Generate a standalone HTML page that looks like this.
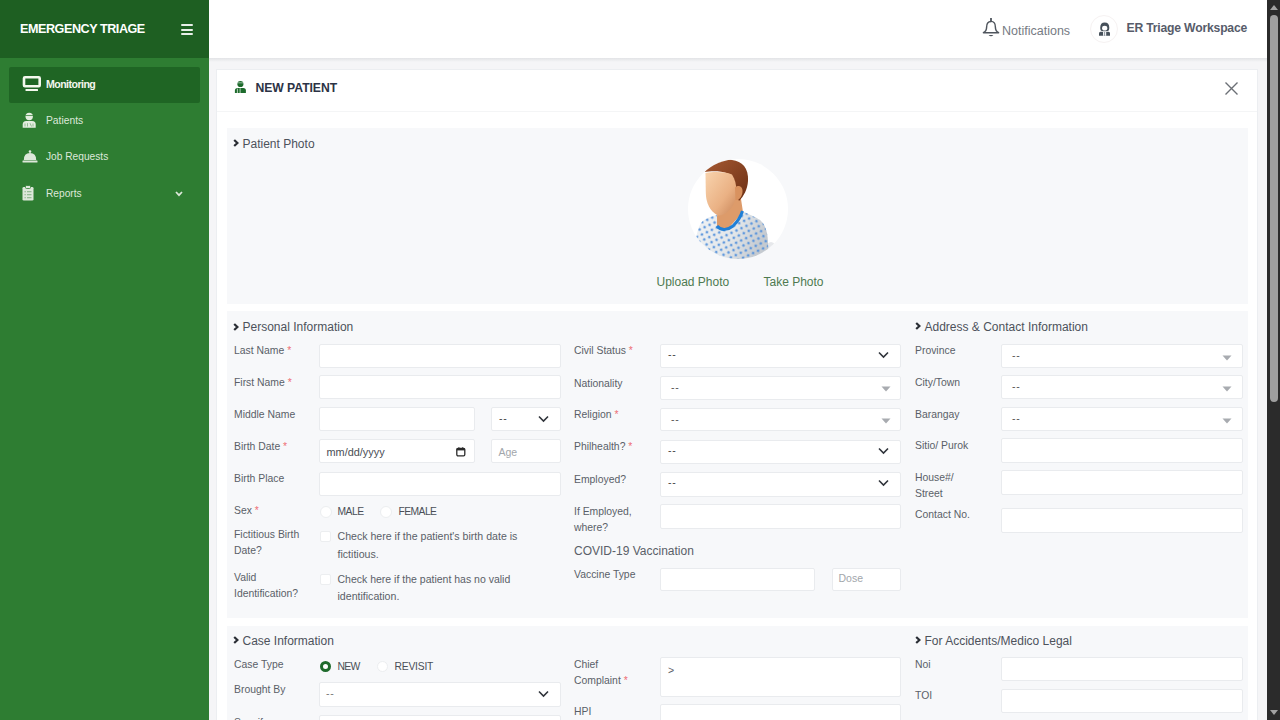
<!DOCTYPE html>
<html><head><meta charset="utf-8"><title>New Patient - Emergency Triage</title>
<style>
html,body{margin:0;padding:0;width:1280px;height:720px;overflow:hidden;background:#f0f1f4;font-family:"Liberation Sans",sans-serif}
.a{position:absolute}
.t{position:absolute;white-space:nowrap}
</style></head><body>
<div class="a" style="left:0px;top:0px;width:209px;height:58px;background:#1e5f22"></div>
<div class="a" style="left:0px;top:58px;width:209px;height:662px;background:#2e7d32"></div>
<div class="a" style="left:209px;top:0px;width:1058px;height:58px;background:#fff"></div>
<div class="a" style="left:209px;top:58px;width:1058px;height:662px;background:#f5f5f7"></div>
<div class="a" style="left:209px;top:58px;width:1058px;height:4px;background:linear-gradient(#e2e3e6,#f5f5f7)"></div>
<div class="a" style="left:1267px;top:0px;width:13px;height:720px;background:#2b2b2b"></div>
<div class="a" style="left:1270px;top:15px;width:8px;height:387px;background:#9f9f9f;border-radius:4px"></div>
<svg class="a" style="left:1269px;top:3px" width="10" height="9"><path d="M1 7 L5 2 L9 7 Z" fill="#a3a3a3"/></svg>
<svg class="a" style="left:1269px;top:708px" width="10" height="9"><path d="M1 2 L5 7 L9 2 Z" fill="#a3a3a3"/></svg>
<div class="t" style="left:20px;top:20.50px;font-size:12.6px;line-height:17px;color:#ffffff;font-weight:bold;letter-spacing:-0.45px;">EMERGENCY TRIAGE</div>
<div class="a" style="left:180.5px;top:24px;width:12.5px;height:2px;background:#e8efe8;border-radius:1px"></div>
<div class="a" style="left:180.5px;top:28.5px;width:12.5px;height:2.0px;background:#e8efe8;border-radius:1px"></div>
<div class="a" style="left:180.5px;top:33px;width:12.5px;height:2px;background:#e8efe8;border-radius:1px"></div>
<div class="a" style="left:9px;top:67px;width:191px;height:36px;background:#1f6524;border-radius:2px"></div>
<svg class="a" style="left:22px;top:75px" width="20" height="17" viewBox="0 0 20 17"><rect x="2" y="2.25" width="15.7" height="9" rx="1" fill="none" stroke="#f4f8ee" stroke-width="2.6"/><rect x="3.5" y="14" width="12.5" height="1.9" rx="0.5" fill="#f4f8ee"/></svg>
<div class="t" style="left:46px;top:77.00px;font-size:10.6px;line-height:14px;color:#f3f7ef;font-weight:bold;letter-spacing:-0.55px;">Monitoring</div>
<svg class="a" style="left:22px;top:112px" width="14" height="16" viewBox="0 0 14 16"><circle cx="7.2" cy="4.5" r="3.7" fill="#e3eddf"/><rect x="3.3" y="3" width="7.8" height="0.9" fill="#2e7d32" opacity="0.8"/><path d="M0.7 15.7 L0.7 12.5 Q0.7 9.2 4.2 9 L10.2 9 Q13.7 9.2 13.7 12.5 L13.7 15.7 Z" fill="#e3eddf"/><path d="M3 11.5 L3 14.5 M5.5 11.2 L5.5 14.5 M8 11.2 L9.5 14.5 M11 11.5 L11 14.5" stroke="#2e7d32" stroke-width="0.8" opacity="0.55"/></svg>
<div class="t" style="left:46px;top:113.50px;font-size:10.3px;line-height:14px;color:#dde8da;font-weight:normal;letter-spacing:0px;">Patients</div>
<svg class="a" style="left:22px;top:150px" width="16" height="13" viewBox="0 0 16 13"><circle cx="8" cy="1.6" r="1.3" fill="#dde8da"/><path d="M1.8 10 Q1.8 3 8 3 Q14.2 3 14.2 10 Z" fill="#dde8da"/><rect x="0.5" y="10.6" width="15" height="1.9" rx="0.5" fill="#dde8da"/></svg>
<div class="t" style="left:46px;top:149.50px;font-size:10.2px;line-height:14px;color:#dde8da;font-weight:normal;letter-spacing:0px;">Job Requests</div>
<svg class="a" style="left:22px;top:185px" width="12" height="16" viewBox="0 0 12 16"><rect x="0.5" y="2" width="11" height="13.6" rx="1.3" fill="#dde8da"/><rect x="3.5" y="0.5" width="5" height="3" rx="1" fill="#dde8da" stroke="#2e7d32" stroke-width="0.8"/><g fill="#2e7d32" opacity="0.4"><rect x="2.5" y="6" width="1.3" height="1.3"/><rect x="5" y="6" width="4.5" height="1.3"/><rect x="2.5" y="9" width="1.3" height="1.3"/><rect x="5" y="9" width="4.5" height="1.3"/><rect x="2.5" y="12" width="1.3" height="1.3"/><rect x="5" y="12" width="4.5" height="1.3"/></g></svg>
<div class="t" style="left:46px;top:186.50px;font-size:10.2px;line-height:14px;color:#dde8da;font-weight:normal;letter-spacing:0px;">Reports</div>
<svg class="a" style="left:175px;top:191px" width="8" height="6" viewBox="0 0 8 6"><path d="M1 1 L4 4.2 L7 1" fill="none" stroke="#dde8da" stroke-width="1.7"/></svg>
<svg class="a" style="left:982px;top:18px" width="18" height="20" viewBox="0 0 18 20"><path d="M9 0.6 L9 3.3" stroke="#4f555d" stroke-width="1.8" stroke-linecap="round"/><path d="M9 3.4 C5.6 3.4 4.6 5.8 4.6 9.2 C4.6 12.3 3.6 13.6 1.4 14.7 L16.6 14.7 C14.4 13.6 13.4 12.3 13.4 9.2 C13.4 5.8 12.4 3.4 9 3.4 Z" fill="none" stroke="#4f555d" stroke-width="1.45" stroke-linejoin="round"/><path d="M6.6 16.9 Q9 19.8 11.4 16.9 Z" fill="#4f555d"/></svg>
<div class="t" style="left:1002px;top:22.50px;font-size:12.5px;line-height:17px;color:#767b83;font-weight:normal;letter-spacing:0px;">Notifications</div>
<div class="a" style="left:1090px;top:15px;width:28px;height:28px;border-radius:50%;border:1px solid #f6f2f2;box-sizing:border-box;background:#fff"></div>
<svg class="a" style="left:1098px;top:21px" width="13" height="16" viewBox="0 0 13 16"><path d="M2.2 7 Q2.2 1.6 6.7 1.6 Q11.3 1.6 11.3 7 Q11.3 9.6 10 9.9 L3.5 9.9 Q2.2 9.6 2.2 7 Z" fill="#46505a"/><ellipse cx="6.7" cy="7.2" rx="2.6" ry="2.4" fill="#fff"/><path d="M1 14.8 L1 12.3 Q1 10.8 2.5 10.8 L10.5 10.8 Q12 10.8 12 12.3 L12 14.8 Z" fill="#46505a"/><rect x="5" y="10.8" width="3.2" height="4" fill="#eef1f4"/><rect x="6.4" y="10.8" width="0.5" height="4" fill="#46505a"/></svg>
<div class="t" style="left:1126.5px;top:20.00px;font-size:12.2px;line-height:16px;color:#575c6a;font-weight:bold;letter-spacing:-0.2px;">ER Triage Workspace</div>
<div class="a" style="left:217px;top:70px;width:1040px;height:650px;background:#fff;box-shadow:0 0 0 1px #eceef1"></div>
<div class="a" style="left:217px;top:111px;width:1040px;height:1px;background:#f4f5f6"></div>
<svg class="a" style="left:234px;top:80px" width="13" height="14" viewBox="0 0 13 14"><circle cx="6.4" cy="4" r="3.1" fill="#1d6b2c"/><rect x="3" y="2.4" width="6.8" height="0.9" fill="#fff" opacity="0.6"/><path d="M0.9 13.1 L0.9 10.5 Q0.9 7.9 3.5 7.9 L9.3 7.9 Q11.9 7.9 11.9 10.5 L11.9 13.1 Z" fill="#1d6b2c"/><path d="M3.4 8.6 L3.4 13.1 M6.1 8.2 L6.1 13.1" stroke="#fff" stroke-width="0.8" opacity="0.85"/></svg>
<div class="t" style="left:255.5px;top:80.00px;font-size:12.2px;line-height:16px;color:#2c3345;font-weight:bold;letter-spacing:-0.05px;">NEW PATIENT</div>
<svg class="a" style="left:1224px;top:81px" width="15" height="15" viewBox="0 0 15 15"><path d="M1.5 1.5 L13.5 13.5 M13.5 1.5 L1.5 13.5" stroke="#6b6f75" stroke-width="1.4"/></svg>
<div class="a" style="left:227px;top:128px;width:1021px;height:176px;background:#f7f8fa"></div>
<div class="a" style="left:227px;top:311px;width:1021px;height:307px;background:#f7f8fa"></div>
<div class="a" style="left:227px;top:626px;width:1021px;height:94px;background:#f7f8fa"></div>
<svg class="a" style="left:233.0px;top:139.0px" width="6" height="8" viewBox="0 0 6 8"><path d="M1.2 1 L4.4 4 L1.2 7" fill="none" stroke="#2a2e35" stroke-width="2.2"/></svg>
<div class="t" style="left:242.5px;top:136.00px;font-size:12px;line-height:16px;color:#4d525b;font-weight:normal;letter-spacing:0px;">Patient Photo</div>
<svg class="a" style="left:233.0px;top:322.59999999999997px" width="6" height="8" viewBox="0 0 6 8"><path d="M1.2 1 L4.4 4 L1.2 7" fill="none" stroke="#2a2e35" stroke-width="2.2"/></svg>
<div class="t" style="left:242.5px;top:319.00px;font-size:12px;line-height:16px;color:#4d525b;font-weight:normal;letter-spacing:0px;">Personal Information</div>
<svg class="a" style="left:915.0px;top:322.2px" width="6" height="8" viewBox="0 0 6 8"><path d="M1.2 1 L4.4 4 L1.2 7" fill="none" stroke="#2a2e35" stroke-width="2.2"/></svg>
<div class="t" style="left:924.5px;top:319.00px;font-size:12px;line-height:16px;color:#4d525b;font-weight:normal;letter-spacing:0px;">Address &amp; Contact Information</div>
<svg class="a" style="left:233.0px;top:636.2px" width="6" height="8" viewBox="0 0 6 8"><path d="M1.2 1 L4.4 4 L1.2 7" fill="none" stroke="#2a2e35" stroke-width="2.2"/></svg>
<div class="t" style="left:242.5px;top:633.00px;font-size:12px;line-height:16px;color:#4d525b;font-weight:normal;letter-spacing:0px;">Case Information</div>
<svg class="a" style="left:915.0px;top:636.4000000000001px" width="6" height="8" viewBox="0 0 6 8"><path d="M1.2 1 L4.4 4 L1.2 7" fill="none" stroke="#2a2e35" stroke-width="2.2"/></svg>
<div class="t" style="left:924.5px;top:633.00px;font-size:12px;line-height:16px;color:#4d525b;font-weight:normal;letter-spacing:0px;">For Accidents/Medico Legal</div>
<svg class="a" style="left:688px;top:159px" width="100" height="100" viewBox="0 0 100 100">
<defs>
<clipPath id="cc"><circle cx="50" cy="50" r="50"/></clipPath>
<linearGradient id="skin" x1="0" y1="0" x2="1" y2="1"><stop offset="0" stop-color="#f8d3ad"/><stop offset="0.6" stop-color="#eab184"/><stop offset="1" stop-color="#c98558"/></linearGradient>
<linearGradient id="hair" x1="0" y1="0" x2="1" y2="1"><stop offset="0" stop-color="#a65a33"/><stop offset="1" stop-color="#6b2f14"/></linearGradient>
<linearGradient id="gown" x1="0" y1="0" x2="1" y2="0.3"><stop offset="0" stop-color="#f1f3f5"/><stop offset="0.6" stop-color="#e3e7ea"/><stop offset="1" stop-color="#c5cad0"/></linearGradient>
<pattern id="dots" width="5.5" height="5.5" patternUnits="userSpaceOnUse" patternTransform="rotate(-25)"><circle cx="2.75" cy="2.75" r="1.4" fill="#5592dc"/></pattern>
</defs>
<circle cx="50" cy="50" r="50" fill="#fff"/>
<g clip-path="url(#cc)">
<ellipse cx="83" cy="92" rx="6" ry="9" fill="#e6e8eb"/>
<path d="M28 57 L40 50 L47 36 L53 40 L55 53 L38 72 L28 68 Z" fill="#dd9b6a"/>
<path d="M7 100 C7 85 8 72 13 64 C17 59 24 57 29 56 L29 67 C33 72 40 71 45 67 C50 62 53 57 54.5 52 C60 55 68 58 72 61 C78 66 80 75 80 85 L81 100 Z" fill="url(#gown)"/>
<path d="M7 100 C7 85 8 72 13 64 C17 59 24 57 29 56 L29 67 C33 72 40 71 45 67 C50 62 53 57 54.5 52 C60 55 68 58 72 61 C78 66 80 75 80 85 L81 100 Z" fill="url(#dots)" opacity="0.9"/>
<path d="M29 67 C33 72 40 71 45 67 C50 62 53 57 54.5 52" fill="none" stroke="#1f7fd6" stroke-width="3"/>
<path d="M16.5 13 C22 4 34 0 44 1 C54 2 61 9 60 22 C59.5 30 56 37 51 42 L47 33 C46 26 44 18 40 14.5 C32 11.5 23 12 16.5 13 Z" fill="url(#hair)"/>
<path d="M17.5 14 C25 12.5 37 12.5 44 15.5 C47 20 48.5 26 48.5 33 C48 42 44 50 38 54 C34 56.5 31 57 29 56 C22 52 18 44 17.8 34 Z" fill="url(#skin)"/>
<path d="M47 28.5 C50 25.5 55 27 54.5 33 C54 38 51 41.5 47.5 41 Z" fill="#d9925f"/>
</g>
</svg>
<div class="t" style="left:656.5px;top:274.00px;font-size:12px;line-height:16px;color:#4e7a50;font-weight:normal;letter-spacing:0px;">Upload Photo</div>
<div class="t" style="left:763.5px;top:274.00px;font-size:12px;line-height:16px;color:#4e7a50;font-weight:normal;letter-spacing:0px;">Take Photo</div>
<div class="t" style="left:234px;top:343.50px;font-size:10.4px;line-height:14px;color:#5a5f68;font-weight:normal;letter-spacing:0px;">Last Name<span style="color:#ee6e73"> *</span></div>
<div class="t" style="left:234px;top:375.50px;font-size:10.4px;line-height:14px;color:#5a5f68;font-weight:normal;letter-spacing:0px;">First Name<span style="color:#ee6e73"> *</span></div>
<div class="t" style="left:234px;top:407.50px;font-size:10.4px;line-height:14px;color:#5a5f68;font-weight:normal;letter-spacing:0px;">Middle Name</div>
<div class="t" style="left:234px;top:439.50px;font-size:10.4px;line-height:14px;color:#5a5f68;font-weight:normal;letter-spacing:0px;">Birth Date<span style="color:#ee6e73"> *</span></div>
<div class="t" style="left:234px;top:471.50px;font-size:10.4px;line-height:14px;color:#5a5f68;font-weight:normal;letter-spacing:0px;">Birth Place</div>
<div class="t" style="left:234px;top:503.50px;font-size:10.4px;line-height:14px;color:#5a5f68;font-weight:normal;letter-spacing:0px;">Sex<span style="color:#ee6e73"> *</span></div>
<div class="a" style="left:319px;top:343.5px;width:242px;height:24.0px;background:#fff;border:1px solid #e9ebee;border-radius:2px;box-sizing:border-box;"></div>
<div class="a" style="left:319px;top:375px;width:242px;height:24px;background:#fff;border:1px solid #e9ebee;border-radius:2px;box-sizing:border-box;"></div>
<div class="a" style="left:319px;top:407px;width:156px;height:24px;background:#fff;border:1px solid #e9ebee;border-radius:2px;box-sizing:border-box;"></div>
<div class="a" style="left:491px;top:407px;width:70px;height:24px;background:#fff;border:1px solid #e9ebee;border-radius:2px;box-sizing:border-box;"></div>
<div class="t" style="left:499px;top:411.00px;font-size:10.5px;line-height:14px;color:#444;font-weight:normal;letter-spacing:0.8px;">--</div>
<svg class="a" style="left:538px;top:415px" width="11" height="8" viewBox="0 0 11 8"><path d="M1 1.5 L5.5 6 L10 1.5" fill="none" stroke="#30343b" stroke-width="1.6"/></svg>
<div class="a" style="left:319px;top:439px;width:156px;height:24px;background:#fff;border:1px solid #e9ebee;border-radius:2px;box-sizing:border-box;"></div>
<div class="a" style="left:491px;top:439px;width:70px;height:24px;background:#fff;border:1px solid #e9ebee;border-radius:2px;box-sizing:border-box;"></div>
<div class="t" style="left:326.5px;top:444.50px;font-size:10.9px;line-height:15px;color:#4a4e55;font-weight:normal;letter-spacing:0px;">mm/dd/yyyy</div>
<svg class="a" style="left:455.5px;top:446.5px" width="10" height="10" viewBox="0 0 10 10"><rect x="0.8" y="1.4" width="8" height="7.4" rx="1.2" fill="none" stroke="#2a2a2a" stroke-width="1.3"/><rect x="0.8" y="1.4" width="8" height="2" fill="#2a2a2a"/><rect x="2.4" y="0.2" width="1" height="1.6" fill="#2a2a2a"/><rect x="6.2" y="0.2" width="1" height="1.6" fill="#2a2a2a"/></svg>
<div class="t" style="left:498.5px;top:445.00px;font-size:10.5px;line-height:14px;color:#a2a6ab;font-weight:normal;letter-spacing:0px;">Age</div>
<div class="a" style="left:319px;top:471.5px;width:242px;height:24.0px;background:#fff;border:1px solid #e9ebee;border-radius:2px;box-sizing:border-box;"></div>
<div class="a" style="left:319.5px;top:505.5px;width:12px;height:12px;border-radius:50%;background:#fff;border:1px solid #eceef0;box-sizing:border-box"></div>
<div class="t" style="left:337.5px;top:504.50px;font-size:10.3px;line-height:14px;color:#4a4f57;font-weight:normal;letter-spacing:-0.5px;">MALE</div>
<div class="a" style="left:379.5px;top:505.5px;width:12px;height:12px;border-radius:50%;background:#fff;border:1px solid #eceef0;box-sizing:border-box"></div>
<div class="t" style="left:398.5px;top:504.50px;font-size:10.3px;line-height:14px;color:#4a4f57;font-weight:normal;letter-spacing:-0.55px;">FEMALE</div>
<div class="t" style="left:234px;top:527.50px;font-size:10.4px;line-height:14px;color:#5a5f68;font-weight:normal;letter-spacing:0px;">Fictitious Birth</div>
<div class="t" style="left:234px;top:543.50px;font-size:10.4px;line-height:14px;color:#5a5f68;font-weight:normal;letter-spacing:0px;">Date?</div>
<div class="t" style="left:234px;top:570.50px;font-size:10.4px;line-height:14px;color:#5a5f68;font-weight:normal;letter-spacing:0px;">Valid</div>
<div class="t" style="left:234px;top:586.50px;font-size:10.4px;line-height:14px;color:#5a5f68;font-weight:normal;letter-spacing:0px;">Identification?</div>
<div class="a" style="left:319.5px;top:530.5px;width:11.5px;height:11px;border-radius:2px;background:#fff;border:1px solid #eceef0;box-sizing:border-box"></div>
<div class="a" style="left:319.5px;top:573.5px;width:11.5px;height:11px;border-radius:2px;background:#fff;border:1px solid #eceef0;box-sizing:border-box"></div>
<div class="t" style="left:337.5px;top:529.00px;font-size:10.6px;line-height:14px;color:#5a5f68;font-weight:normal;letter-spacing:0px;">Check here if the patient&#39;s birth date is</div>
<div class="t" style="left:337.5px;top:547.00px;font-size:10.6px;line-height:14px;color:#5a5f68;font-weight:normal;letter-spacing:0px;">fictitious.</div>
<div class="t" style="left:337.5px;top:572.00px;font-size:10.5px;line-height:14px;color:#5a5f68;font-weight:normal;letter-spacing:0px;">Check here if the patient has no valid</div>
<div class="t" style="left:337.5px;top:589.00px;font-size:10.6px;line-height:14px;color:#5a5f68;font-weight:normal;letter-spacing:0px;">identification.</div>
<div class="t" style="left:574px;top:343.50px;font-size:10.4px;line-height:14px;color:#5a5f68;font-weight:normal;letter-spacing:0px;">Civil Status<span style="color:#ee6e73"> *</span></div>
<div class="t" style="left:574px;top:376.50px;font-size:10.4px;line-height:14px;color:#5a5f68;font-weight:normal;letter-spacing:0px;">Nationality</div>
<div class="t" style="left:574px;top:407.50px;font-size:10.4px;line-height:14px;color:#5a5f68;font-weight:normal;letter-spacing:0px;">Religion<span style="color:#ee6e73"> *</span></div>
<div class="t" style="left:574px;top:439.50px;font-size:10.4px;line-height:14px;color:#5a5f68;font-weight:normal;letter-spacing:0px;">Philhealth?<span style="color:#ee6e73"> *</span></div>
<div class="t" style="left:574px;top:472.50px;font-size:10.4px;line-height:14px;color:#5a5f68;font-weight:normal;letter-spacing:0px;">Employed?</div>
<div class="t" style="left:574px;top:504.50px;font-size:10.4px;line-height:14px;color:#5a5f68;font-weight:normal;letter-spacing:0px;">If Employed,</div>
<div class="t" style="left:574px;top:520.50px;font-size:10.4px;line-height:14px;color:#5a5f68;font-weight:normal;letter-spacing:0px;">where?</div>
<div class="t" style="left:574px;top:567.50px;font-size:10.4px;line-height:14px;color:#5a5f68;font-weight:normal;letter-spacing:0px;">Vaccine Type</div>
<div class="a" style="left:660px;top:343.5px;width:241px;height:24.5px;background:#fff;border:1px solid #e9ebee;border-radius:2px;box-sizing:border-box;"></div>
<div class="t" style="left:668px;top:347.00px;font-size:10.5px;line-height:14px;color:#444;font-weight:normal;letter-spacing:0.8px;">--</div>
<svg class="a" style="left:878px;top:351px" width="11" height="8" viewBox="0 0 11 8"><path d="M1 1.5 L5.5 6 L10 1.5" fill="none" stroke="#30343b" stroke-width="1.6"/></svg>
<div class="a" style="left:660px;top:376px;width:241px;height:23.5px;background:#fff;border:1px solid #e9ebee;border-radius:2px;box-sizing:border-box;"></div>
<div class="t" style="left:671px;top:380.00px;font-size:10.5px;line-height:14px;color:#555;font-weight:normal;letter-spacing:0.8px;">--</div>
<svg class="a" style="left:881px;top:386px" width="10" height="6" viewBox="0 0 10 6"><path d="M0.5 0.5 L9.5 0.5 L5 5.5 Z" fill="#a8abb0"/></svg>
<div class="a" style="left:660px;top:407.5px;width:241px;height:23.5px;background:#fff;border:1px solid #e9ebee;border-radius:2px;box-sizing:border-box;"></div>
<div class="t" style="left:671px;top:412.00px;font-size:10.5px;line-height:14px;color:#555;font-weight:normal;letter-spacing:0.8px;">--</div>
<svg class="a" style="left:881px;top:418px" width="10" height="6" viewBox="0 0 10 6"><path d="M0.5 0.5 L9.5 0.5 L5 5.5 Z" fill="#a8abb0"/></svg>
<div class="a" style="left:660px;top:439.5px;width:241px;height:24.0px;background:#fff;border:1px solid #e9ebee;border-radius:2px;box-sizing:border-box;"></div>
<div class="t" style="left:668px;top:443.00px;font-size:10.5px;line-height:14px;color:#444;font-weight:normal;letter-spacing:0.8px;">--</div>
<svg class="a" style="left:878px;top:447px" width="11" height="8" viewBox="0 0 11 8"><path d="M1 1.5 L5.5 6 L10 1.5" fill="none" stroke="#30343b" stroke-width="1.6"/></svg>
<div class="a" style="left:660px;top:471.5px;width:241px;height:25.0px;background:#fff;border:1px solid #e9ebee;border-radius:2px;box-sizing:border-box;"></div>
<div class="t" style="left:668px;top:475.00px;font-size:10.5px;line-height:14px;color:#444;font-weight:normal;letter-spacing:0.8px;">--</div>
<svg class="a" style="left:878px;top:479px" width="11" height="8" viewBox="0 0 11 8"><path d="M1 1.5 L5.5 6 L10 1.5" fill="none" stroke="#30343b" stroke-width="1.6"/></svg>
<div class="a" style="left:660px;top:503.5px;width:241px;height:25.0px;background:#fff;border:1px solid #e9ebee;border-radius:2px;box-sizing:border-box;"></div>
<div class="t" style="left:574px;top:543.00px;font-size:12px;line-height:16px;color:#5a5f68;font-weight:normal;letter-spacing:0px;">COVID-19 Vaccination</div>
<div class="a" style="left:660px;top:567.5px;width:155px;height:23.5px;background:#fff;border:1px solid #e9ebee;border-radius:2px;box-sizing:border-box;"></div>
<div class="a" style="left:832px;top:567.5px;width:69px;height:23.5px;background:#fff;border:1px solid #e9ebee;border-radius:2px;box-sizing:border-box;"></div>
<div class="t" style="left:838.5px;top:571.00px;font-size:10.5px;line-height:14px;color:#a2a6ab;font-weight:normal;letter-spacing:0px;">Dose</div>
<div class="t" style="left:915px;top:343.50px;font-size:10.4px;line-height:14px;color:#5a5f68;font-weight:normal;letter-spacing:0px;">Province</div>
<div class="t" style="left:915px;top:375.50px;font-size:10.4px;line-height:14px;color:#5a5f68;font-weight:normal;letter-spacing:0px;">City/Town</div>
<div class="t" style="left:915px;top:407.50px;font-size:10.4px;line-height:14px;color:#5a5f68;font-weight:normal;letter-spacing:0px;">Barangay</div>
<div class="t" style="left:915px;top:438.50px;font-size:10.4px;line-height:14px;color:#5a5f68;font-weight:normal;letter-spacing:0px;">Sitio/ Purok</div>
<div class="t" style="left:915px;top:470.50px;font-size:10.4px;line-height:14px;color:#5a5f68;font-weight:normal;letter-spacing:0px;">House#/</div>
<div class="t" style="left:915px;top:486.50px;font-size:10.4px;line-height:14px;color:#5a5f68;font-weight:normal;letter-spacing:0px;">Street</div>
<div class="t" style="left:915px;top:507.50px;font-size:10.4px;line-height:14px;color:#5a5f68;font-weight:normal;letter-spacing:0px;">Contact No.</div>
<div class="a" style="left:1001px;top:343.5px;width:242px;height:24.0px;background:#fff;border:1px solid #e9ebee;border-radius:2px;box-sizing:border-box;"></div>
<div class="t" style="left:1012px;top:348.00px;font-size:10.5px;line-height:14px;color:#555;font-weight:normal;letter-spacing:0.8px;">--</div>
<svg class="a" style="left:1222px;top:354.5px" width="10" height="6" viewBox="0 0 10 6"><path d="M0.5 0.5 L9.5 0.5 L5 5.5 Z" fill="#a8abb0"/></svg>
<div class="a" style="left:1001px;top:375px;width:242px;height:24px;background:#fff;border:1px solid #e9ebee;border-radius:2px;box-sizing:border-box;"></div>
<div class="t" style="left:1012px;top:379.00px;font-size:10.5px;line-height:14px;color:#555;font-weight:normal;letter-spacing:0.8px;">--</div>
<svg class="a" style="left:1222px;top:386.0px" width="10" height="6" viewBox="0 0 10 6"><path d="M0.5 0.5 L9.5 0.5 L5 5.5 Z" fill="#a8abb0"/></svg>
<div class="a" style="left:1001px;top:407px;width:242px;height:23.5px;background:#fff;border:1px solid #e9ebee;border-radius:2px;box-sizing:border-box;"></div>
<div class="t" style="left:1012px;top:411.00px;font-size:10.5px;line-height:14px;color:#555;font-weight:normal;letter-spacing:0.8px;">--</div>
<svg class="a" style="left:1222px;top:417.75px" width="10" height="6" viewBox="0 0 10 6"><path d="M0.5 0.5 L9.5 0.5 L5 5.5 Z" fill="#a8abb0"/></svg>
<div class="a" style="left:1001px;top:437.5px;width:242px;height:25.0px;background:#fff;border:1px solid #e9ebee;border-radius:2px;box-sizing:border-box;"></div>
<div class="a" style="left:1001px;top:469.5px;width:242px;height:25.0px;background:#fff;border:1px solid #e9ebee;border-radius:2px;box-sizing:border-box;"></div>
<div class="a" style="left:1001px;top:507.5px;width:242px;height:25.0px;background:#fff;border:1px solid #e9ebee;border-radius:2px;box-sizing:border-box;"></div>
<div class="t" style="left:234px;top:657.50px;font-size:10.4px;line-height:14px;color:#5a5f68;font-weight:normal;letter-spacing:0px;">Case Type</div>
<div class="a" style="left:319.5px;top:660.5px;width:11px;height:11px;border-radius:50%;background:#fff;border:3px solid #1f6b2c;box-sizing:border-box"></div>
<div class="t" style="left:337.5px;top:659.50px;font-size:10.4px;line-height:14px;color:#4a4f57;font-weight:normal;letter-spacing:-0.7px;">NEW</div>
<div class="a" style="left:376.5px;top:660.5px;width:11px;height:11px;border-radius:50%;background:#fff;border:1px solid #eceef0;box-sizing:border-box"></div>
<div class="t" style="left:394.5px;top:659.50px;font-size:10.3px;line-height:14px;color:#4a4f57;font-weight:normal;letter-spacing:-0.2px;">REVISIT</div>
<div class="t" style="left:234px;top:682.50px;font-size:10.4px;line-height:14px;color:#5a5f68;font-weight:normal;letter-spacing:0px;">Brought By</div>
<div class="a" style="left:319px;top:681.5px;width:242px;height:25.0px;background:#fff;border:1px solid #e9ebee;border-radius:2px;box-sizing:border-box;"></div>
<div class="t" style="left:326px;top:686.00px;font-size:10.5px;line-height:14px;color:#777;font-weight:normal;letter-spacing:0.8px;">--</div>
<svg class="a" style="left:538px;top:690px" width="11" height="8" viewBox="0 0 11 8"><path d="M1 1.5 L5.5 6 L10 1.5" fill="none" stroke="#30343b" stroke-width="1.6"/></svg>
<div class="t" style="left:234px;top:715.50px;font-size:10.4px;line-height:14px;color:#5a5f68;font-weight:normal;letter-spacing:0px;">Specify</div>
<div class="a" style="left:319px;top:714.5px;width:242px;height:25.5px;background:#fff;border:1px solid #e9ebee;border-radius:2px;box-sizing:border-box;"></div>
<div class="t" style="left:574px;top:657.50px;font-size:10.4px;line-height:14px;color:#5a5f68;font-weight:normal;letter-spacing:0px;">Chief</div>
<div class="t" style="left:574px;top:673.50px;font-size:10.4px;line-height:14px;color:#5a5f68;font-weight:normal;letter-spacing:0px;">Complaint<span style="color:#ee6e73"> *</span></div>
<div class="a" style="left:660px;top:656.5px;width:241px;height:40.0px;background:#fff;border:1px solid #e9ebee;border-radius:2px;box-sizing:border-box;"></div>
<div class="t" style="left:668px;top:663.00px;font-size:10.5px;line-height:14px;color:#5a5e66;font-weight:normal;letter-spacing:0px;">&gt;</div>
<div class="t" style="left:574px;top:704.50px;font-size:10.4px;line-height:14px;color:#5a5f68;font-weight:normal;letter-spacing:0px;">HPI</div>
<div class="a" style="left:660px;top:704px;width:241px;height:36px;background:#fff;border:1px solid #e9ebee;border-radius:2px;box-sizing:border-box;"></div>
<div class="t" style="left:915px;top:657.50px;font-size:10.4px;line-height:14px;color:#5a5f68;font-weight:normal;letter-spacing:0px;">Noi</div>
<div class="t" style="left:915px;top:688.50px;font-size:10.4px;line-height:14px;color:#5a5f68;font-weight:normal;letter-spacing:0px;">TOI</div>
<div class="a" style="left:1001px;top:656.5px;width:242px;height:24.5px;background:#fff;border:1px solid #e9ebee;border-radius:2px;box-sizing:border-box;"></div>
<div class="a" style="left:1001px;top:688.5px;width:242px;height:24.0px;background:#fff;border:1px solid #e9ebee;border-radius:2px;box-sizing:border-box;"></div>

</body></html>
